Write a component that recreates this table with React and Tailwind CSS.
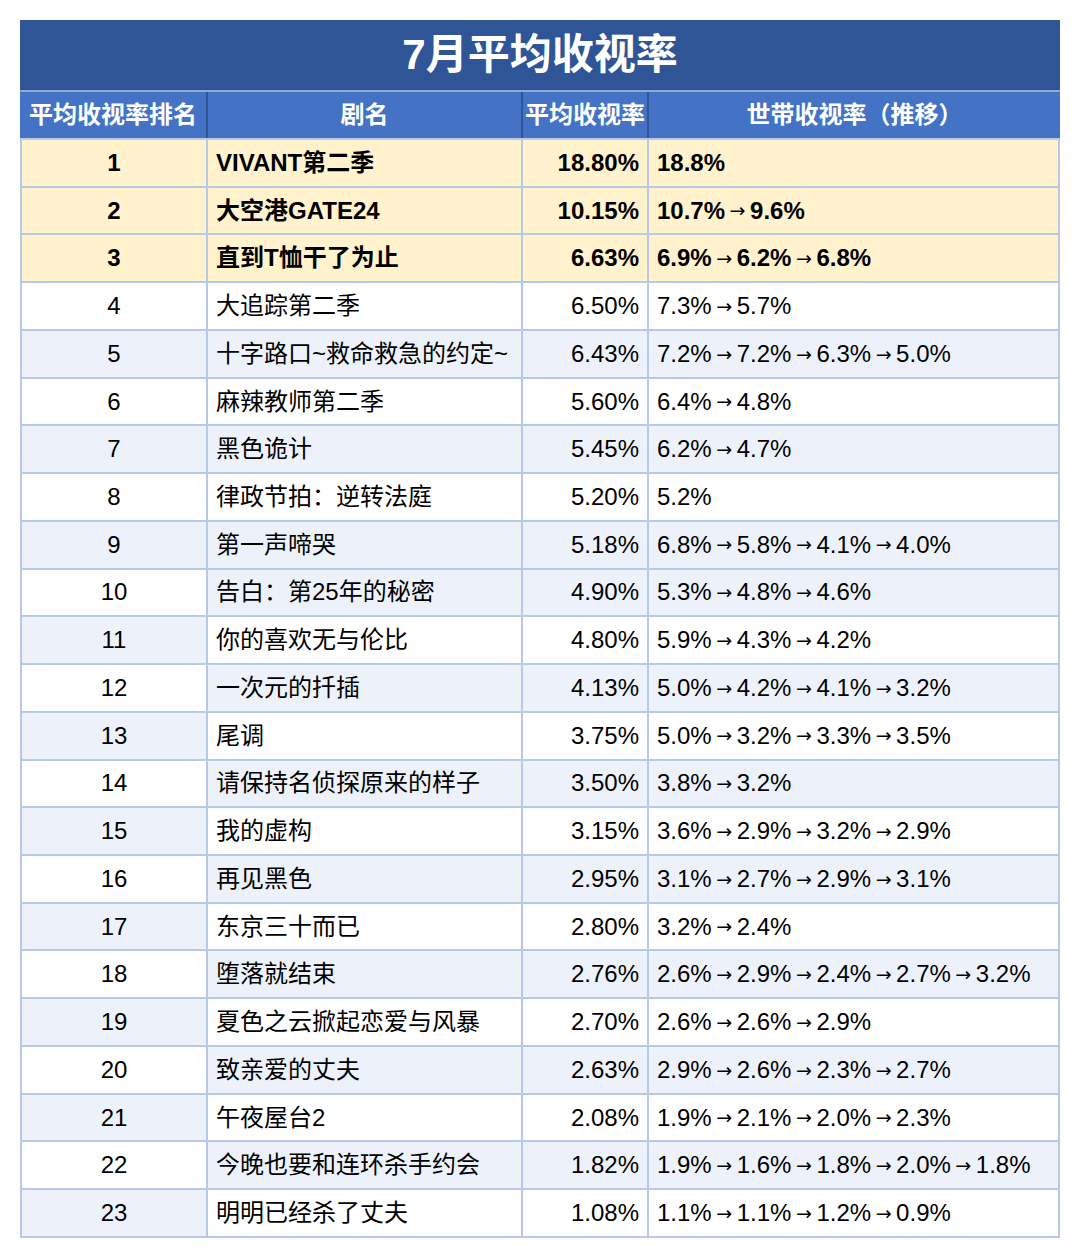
import React from 'react'

const rows = [
  ['1', 'VIVANT第二季', '18.80%', '18.8%'],
  ['2', '大空港GATE24', '10.15%', '10.7%→9.6%'],
  ['3', '直到T恤干了为止', '6.63%', '6.9%→6.2%→6.8%'],
  ['4', '大追踪第二季', '6.50%', '7.3%→5.7%'],
  ['5', '十字路口~救命救急的约定~', '6.43%', '7.2%→7.2%→6.3%→5.0%'],
  ['6', '麻辣教师第二季', '5.60%', '6.4%→4.8%'],
  ['7', '黑色诡计', '5.45%', '6.2%→4.7%'],
  ['8', '律政节拍：逆转法庭', '5.20%', '5.2%'],
  ['9', '第一声啼哭', '5.18%', '6.8%→5.8%→4.1%→4.0%'],
  ['10', '告白：第25年的秘密', '4.90%', '5.3%→4.8%→4.6%'],
  ['11', '你的喜欢无与伦比', '4.80%', '5.9%→4.3%→4.2%'],
  ['12', '一次元的扦插', '4.13%', '5.0%→4.2%→4.1%→3.2%'],
  ['13', '尾调', '3.75%', '5.0%→3.2%→3.3%→3.5%'],
  ['14', '请保持名侦探原来的样子', '3.50%', '3.8%→3.2%'],
  ['15', '我的虚构', '3.15%', '3.6%→2.9%→3.2%→2.9%'],
  ['16', '再见黑色', '2.95%', '3.1%→2.7%→2.9%→3.1%'],
  ['17', '东京三十而已', '2.80%', '3.2%→2.4%'],
  ['18', '堕落就结束', '2.76%', '2.6%→2.9%→2.4%→2.7%→3.2%'],
  ['19', '夏色之云掀起恋爱与风暴', '2.70%', '2.6%→2.6%→2.9%'],
  ['20', '致亲爱的丈夫', '2.63%', '2.9%→2.6%→2.3%→2.7%'],
  ['21', '午夜屋台2', '2.08%', '1.9%→2.1%→2.0%→2.3%'],
  ['22', '今晚也要和连环杀手约会', '1.82%', '1.9%→1.6%→1.8%→2.0%→1.8%'],
  ['23', '明明已经杀了丈夫', '1.08%', '1.1%→1.1%→1.2%→0.9%'],
]

const font = { fontFamily: '"Liberation Sans", "Noto Sans CJK SC", sans-serif' }

function cellBg(rank, col) {
  if (rank <= 3) return 'bg-[#fff2cc]'
  // first column stripes odd rows, the rest shift after row 9
  const light = col === 0 || rank < 10 ? rank % 2 === 1 : rank % 2 === 0
  return light ? 'bg-[#edf2fa]' : 'bg-white'
}

function Trend({ text }) {
  const parts = text.split('→')
  return (
    <span className="inline-flex items-center">
      {parts.map((p, i) => (
        <React.Fragment key={i}>
          {i > 0 && (
            <span className="inline-block w-[25px] text-center text-[19px] font-normal" style={{ fontFamily: '"DejaVu Sans", sans-serif' }}>→</span>
          )}
          <span>{p}</span>
        </React.Fragment>
      ))}
    </span>
  )
}

export default function App() {
  return (
    <div className="min-h-screen bg-white pt-5 px-5 text-black" style={font}>
      <div className="w-[1040px]">
        {/* Title */}
        <div className="h-[70px] bg-[#2f5597] flex items-center justify-center">
          <h1 className="text-[42px] font-bold text-white leading-none">7月平均收视率</h1>
        </div>

        {/* Header */}
        <div className="grid grid-cols-[188px_315px_126px_1fr] h-[48px] bg-[#4472c4] border-t-2 border-[#8eaadb] text-white font-bold text-[24px]">
          <div className="flex items-center justify-center border-r-2 border-[#2f5597]">平均收视率排名</div>
          <div className="flex items-center justify-center border-r-2 border-[#2f5597]">剧名</div>
          <div className="flex items-center justify-center border-r-2 border-[#2f5597] whitespace-nowrap">平均收视率</div>
          <div className="flex items-center justify-center">世带收视率（推移）</div>
        </div>

        {/* Body */}
        <div className="border-l-2 border-t-2 border-[#b8c9e8]">
          {rows.map(([rank, name, avg, trend]) => {
            const r = Number(rank)
            const bold = r <= 3 ? 'font-bold' : ''
            return (
              <div key={rank} className={`grid grid-cols-[186px_315px_126px_1fr] h-[47.74px] text-[24px] ${bold}`}>
                <div className={`flex items-center justify-center border-r-2 border-b-2 border-[#b8c9e8] ${cellBg(r, 0)}`}>{rank}</div>
                <div className={`flex items-center pl-2 border-r-2 border-b-2 border-[#b8c9e8] whitespace-nowrap ${cellBg(r, 1)}`}>{name}</div>
                <div className={`flex items-center justify-end pr-2 border-r-2 border-b-2 border-[#b8c9e8] ${cellBg(r, 2)}`}>{avg}</div>
                <div className={`flex items-center pl-2 border-r-2 border-b-2 border-[#b8c9e8] whitespace-nowrap ${cellBg(r, 3)}`}>
                  <Trend text={trend} />
                </div>
              </div>
            )
          })}
        </div>
      </div>
    </div>
  )
}
